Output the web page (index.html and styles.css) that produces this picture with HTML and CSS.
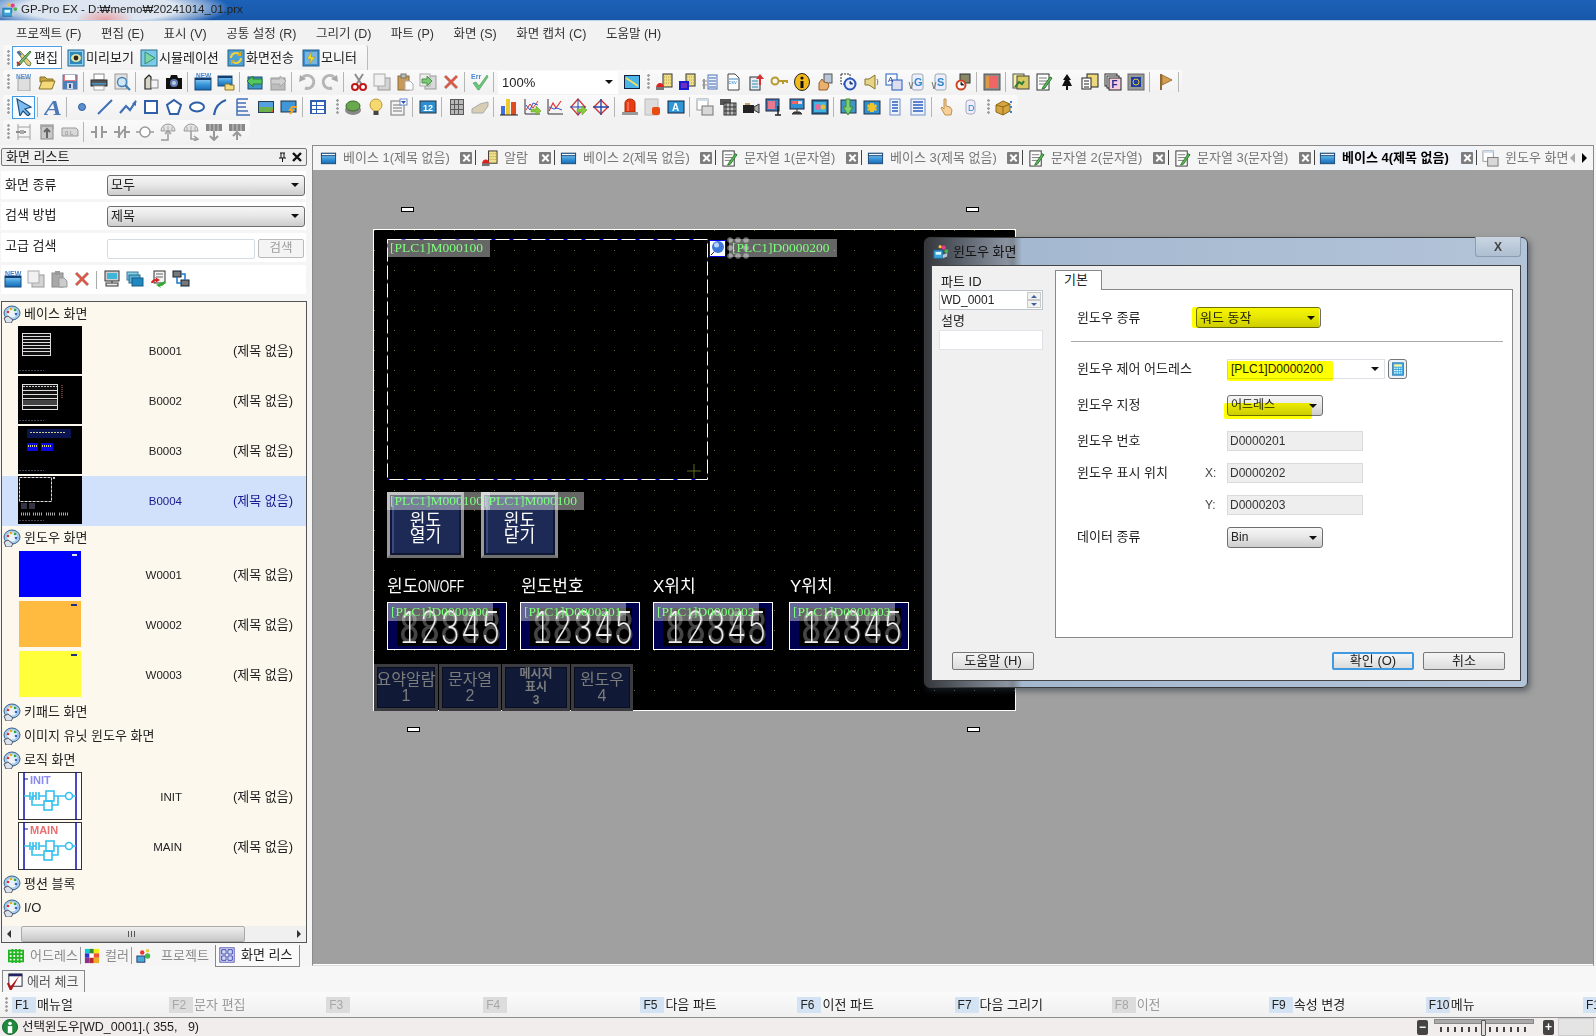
FILE: index.html
```html
<!DOCTYPE html>
<html lang="ko">
<head>
<meta charset="utf-8">
<title>GP-Pro EX</title>
<link rel="stylesheet" href="styles.css">
</head>
<body>
<svg class="defs" xmlns="http://www.w3.org/2000/svg">
<defs>
<linearGradient id="bw" x1="0" y1="0" x2="0" y2="1"><stop offset="0" stop-color="#9fd4f5"/><stop offset=".5" stop-color="#3d9bdc"/><stop offset="1" stop-color="#1669b4"/></linearGradient>
<symbol id="app" viewBox="0 0 18 18"><rect x="1" y="7" width="10" height="9" fill="#3ea3d8" stroke="#1d6fa5"/><rect x="3" y="9" width="6" height="3" fill="#dff"/><circle cx="12" cy="4" r="2.4" fill="#e8398c"/><circle cx="15" cy="8" r="2.2" fill="#49b649"/><circle cx="8" cy="3" r="1.8" fill="#f2c230"/><path d="M11 12l5-2v4l-5 2z" fill="#b5c7d8"/></symbol>
<symbol id="edit" viewBox="0 0 18 18"><path d="M2 3l3-1 11 12-1 3-3-1z" fill="#e3d27c" stroke="#6f7d52"/><path d="M15 2l1 1L5 16l-3 1 1-3z" fill="#7fb96c" stroke="#4a7a47"/><path d="M2 13l3 3" stroke="#b33" stroke-width="2"/><path d="M3 3l3 3" stroke="#46a" stroke-width="2"/></symbol>
<symbol id="prev" viewBox="0 0 18 18"><rect x="1" y="1" width="16" height="16" fill="#8fd0ef" stroke="#24608c"/><rect x="3" y="3" width="12" height="12" fill="#2b88b8"/><ellipse cx="9" cy="9" rx="5" ry="4" fill="#e8e2a8"/><circle cx="9" cy="9" r="2.4" fill="#2a2a18"/></symbol>
<symbol id="sim" viewBox="0 0 18 18"><rect x="1" y="1" width="16" height="16" fill="#7cc9e8" stroke="#24708c"/><path d="M5 3l10 6-10 6z" fill="#7fd4a4" stroke="#2f8f78"/></symbol>
<symbol id="send" viewBox="0 0 18 18"><rect x="1" y="1" width="16" height="16" fill="#4ca0d4" stroke="#24608c"/><path d="M4 9a5 5 0 0 1 9-3M14 9a5 5 0 0 1-9 3" fill="none" stroke="#f0d040" stroke-width="2"/><path d="M14 2v5h-4zM4 16v-5h4z" fill="#d8a820"/></symbol>
<symbol id="moni" viewBox="0 0 18 18"><rect x="1" y="1" width="16" height="16" fill="#3f8fd0" stroke="#24608c"/><rect x="3" y="3" width="12" height="12" fill="#77b5e5"/><path d="M10 2L5 10h4l-2 6 6-8H9z" fill="#f2e030" stroke="#a08a10" stroke-width=".5"/></symbol>
<symbol id="new" viewBox="0 0 18 18"><rect x="3" y="5" width="12" height="13" fill="#dedede" stroke="#a5a5a5"/><text x="1" y="6" font-size="6.5" font-weight="700" font-family="Liberation Sans" fill="#5a8fd0">NEW</text></symbol>
<symbol id="open" viewBox="0 0 18 18"><path d="M2 4h5l2 2h6v3H2z" fill="#c9a540" stroke="#857025"/><path d="M1 16L4 8h13l-3 8z" fill="#f5d877" stroke="#857025"/></symbol>
<symbol id="save" viewBox="0 0 18 18"><rect x="2" y="2" width="14" height="14" fill="#e57a80" stroke="#5c6f9a"/><rect x="4" y="2" width="10" height="5" fill="#fff"/><rect x="2" y="8" width="14" height="8" fill="#4f7fb8"/><rect x="6" y="10" width="6" height="6" fill="#cfd8e8"/><rect x="8" y="11" width="2" height="4" fill="#33527f"/></symbol>
<symbol id="print" viewBox="0 0 18 18"><rect x="4" y="1" width="10" height="6" fill="#fff" stroke="#888"/><rect x="1" y="7" width="16" height="6" fill="#555" stroke="#333"/><rect x="2" y="10" width="14" height="1.5" fill="#49c"/><rect x="4" y="13" width="10" height="4" fill="#fff" stroke="#aaa"/></symbol>
<symbol id="preview" viewBox="0 0 18 18"><rect x="2" y="1" width="12" height="15" fill="#e2e2e2" stroke="#999"/><circle cx="9" cy="9" r="4.5" fill="#cfe7f7" stroke="#3f7fb5" stroke-width="1.3"/><path d="M12 12l5 5" stroke="#3f7fb5" stroke-width="2.2"/></symbol>
<symbol id="clip" viewBox="0 0 18 18"><path d="M3 6l4-4 2 2v12H3z" fill="#d9d6c5" stroke="#222" stroke-width="1.2"/><rect x="9" y="7" width="7" height="8" fill="#f4f4f4" stroke="#888"/></symbol>
<symbol id="cam" viewBox="0 0 18 18"><path d="M1 5h4l1-3h6l1 3h4v11H1z" fill="#111"/><circle cx="9" cy="10" r="4" fill="#5f7fb8"/><circle cx="9" cy="10" r="2" fill="#bcd"/></symbol>
<symbol id="win" viewBox="0 0 18 18"><rect x="1.500" y="3.500" width="15" height="11" fill="url(#bw)" stroke="#1b4a78"/><rect x="1.500" y="3.500" width="15" height="2.500" fill="#eef6fc" stroke="#1b4a78"/></symbol>
<symbol id="newscr" viewBox="0 0 18 18"><rect x="1" y="5" width="16" height="12" fill="url(#bw)" stroke="#1b4a78"/><rect x="1" y="5" width="16" height="2" fill="#123f70"/><text x="2" y="5" font-size="6.500" font-weight="700" font-family="Liberation Sans" fill="#4c88cc">NEW</text></symbol>
<symbol id="scrf" viewBox="0 0 18 18"><rect x="1" y="3" width="14" height="10" fill="url(#bw)" stroke="#24507a"/><rect x="1" y="3" width="14" height="2" fill="#123f70"/><path d="M8 11h4l1 1h4v5H8z" fill="#f3dd80" stroke="#8a7428"/></symbol>
<symbol id="gback" viewBox="0 0 18 18"><rect x="2" y="4" width="14" height="12" fill="#3f97c7" stroke="#1b4a78"/><path d="M1 8l6-5v3h9v5H7v3z" fill="#56c65e" stroke="#2b7d38"/></symbol>
<symbol id="gfwd" viewBox="0 0 18 18"><rect x="2" y="5" width="14" height="12" fill="#bdbdbd" stroke="#999"/><path d="M17 8l-6-5v3H2v5h9v3z" fill="#cfcfcf" stroke="#a8a8a8"/></symbol>
<symbol id="undo" viewBox="0 0 18 18"><path d="M5 4a6.500 6.500 0 1 1 2 11" fill="none" stroke="#b5b5b5" stroke-width="3"/><path d="M1 9l1-7 6 4z" fill="#a8a8a8"/></symbol>
<symbol id="redo" viewBox="0 0 18 18"><path d="M13 4a6.500 6.500 0 1 0-2 11" fill="none" stroke="#b5b5b5" stroke-width="3"/><path d="M17 9l-1-7-6 4z" fill="#a8a8a8"/></symbol>
<symbol id="cut" viewBox="0 0 18 18"><path d="M5 1l7 11M13 1L6 12" stroke="#8d8d8d" stroke-width="2"/><circle cx="5" cy="14" r="3" fill="#fff" stroke="#c01818" stroke-width="2"/><circle cx="13" cy="14" r="3" fill="#fff" stroke="#c01818" stroke-width="2"/></symbol>
<symbol id="copy" viewBox="0 0 18 18"><rect x="5" y="5" width="12" height="12" fill="#d4d4d4" stroke="#999"/><rect x="1" y="1" width="11" height="12" fill="#f1f1f1" stroke="#aaa"/></symbol>
<symbol id="paste" viewBox="0 0 18 18"><rect x="2" y="3" width="11" height="14" fill="#c99a58" stroke="#8a6a3a"/><rect x="5" y="1" width="5" height="4" fill="#bbb" stroke="#777"/><path d="M9 8h5l3 3v6H9z" fill="#fff" stroke="#aaa"/></symbol>
<symbol id="dup" viewBox="0 0 18 18"><rect x="6" y="3" width="11" height="13" fill="#d8d8d8" stroke="#999"/><rect x="1" y="1" width="10" height="12" fill="#eee" stroke="#aaa"/><path d="M3 6h5V3l5 5-5 5v-3H3z" fill="#7cc777" stroke="#4b9448"/></symbol>
<symbol id="del" viewBox="0 0 18 18"><path d="M2 4l2-2 5 5 5-5 2 2-5 5 5 5-2 2-5-5-5 5-2-2 5-5z" fill="#dc5a48" stroke="#b8b8b8" stroke-width=".6"/></symbol>
<symbol id="err" viewBox="0 0 18 18"><text x="0" y="6" font-size="7" font-weight="700" font-family="Liberation Sans" fill="#4c88cc">Err</text><path d="M2 10l3-1 3 4 8-11 1 2-9 13h-1z" fill="#69c77a" stroke="#3c8a4a" stroke-width=".5"/></symbol>
<symbol id="mon" viewBox="0 0 18 18"><rect x="1" y="2" width="16" height="14" fill="#111f40"/><rect x="2" y="3" width="14" height="12" fill="#4cb5e8"/><path d="M3 5l12 8" stroke="#f5e060" stroke-width="1.600"/></symbol>
<symbol id="almb" viewBox="0 0 18 18"><rect x="8" y="1" width="9" height="13" fill="#efe08a" stroke="#333"/><path d="M9 4h7M9 7h7M9 10h7" stroke="#b8a040" stroke-dasharray="1 1"/><path d="M1 15a4 5 0 0 1 8 0z" fill="#d22"/><rect x="1" y="14" width="8" height="3" fill="#777"/></symbol>
<symbol id="almc" viewBox="0 0 18 18"><rect x="8" y="1" width="9" height="12" fill="#efe08a" stroke="#333"/><path d="M9 4h7M9 7h7M9 10h7" stroke="#b8a040" stroke-dasharray="1 1"/><rect x="2" y="9" width="8" height="7" fill="#6a2ec0" stroke="#1a1ad0" stroke-width="2"/></symbol>
<symbol id="vlist" viewBox="0 0 18 18"><rect x="7" y="2" width="9" height="14" fill="#eef2fa" stroke="#4f79b8"/><path d="M8 5h7M8 8h7M8 11h7M8 14h7" stroke="#3f66b0"/><rect x="2" y="6" width="2" height="10" fill="#9a9a9a"/><path d="M1 8h5M1 12h5" stroke="#999"/></symbol>
<symbol id="csv" viewBox="0 0 18 18"><path d="M4 1h7l4 4v12H4z" fill="#fff" stroke="#444"/><path d="M5 6h9" stroke="#38c"/><text x="4.500" y="11" font-size="5.500" font-family="Liberation Sans" fill="#38c">csv</text></symbol>
<symbol id="up" viewBox="0 0 18 18"><rect x="3" y="4" width="10" height="13" fill="#e8edf5" stroke="#233"/><path d="M5 8h6M5 11h6M5 14h6" stroke="#38a"/><path d="M13 1l4 5h-3v6h-2V6H9z" fill="#d43030"/></symbol>
<symbol id="key" viewBox="0 0 18 18"><circle cx="5" cy="8" r="3.500" fill="none" stroke="#b89a30" stroke-width="2"/><path d="M8 8h9v2M13 8v3" fill="none" stroke="#b89a30" stroke-width="2"/></symbol>
<symbol id="info" viewBox="0 0 18 18"><ellipse cx="9" cy="9" rx="7.500" ry="8.500" fill="#f2b91c" stroke="#222"/><circle cx="9" cy="5" r="1.600" fill="#111"/><rect x="7.500" y="8" width="3" height="7" fill="#111"/></symbol>
<symbol id="hand" viewBox="0 0 18 18"><rect x="8" y="1" width="8" height="9" fill="#b8c6d8" stroke="#555"/><path d="M3 17v-7l3-4 2 3 4 1 1 3-2 4z" fill="#eab06e" stroke="#96602a"/></symbol>
<symbol id="clock" viewBox="0 0 18 18"><rect x="2" y="1" width="9" height="10" fill="#fff" stroke="#333" stroke-dasharray="2 1"/><circle cx="11" cy="11" r="5.500" fill="#e8eefa" stroke="#2b57b8" stroke-width="2"/><path d="M11 8v3h3" stroke="#2b57b8"/></symbol>
<symbol id="spk" viewBox="0 0 18 18"><path d="M3 6h4l6-4v14l-6-4H3z" fill="#e6d488" stroke="#8a7428"/><path d="M15 6c1 2 1 4 0 6" stroke="#8a7428" fill="none"/></symbol>
<symbol id="abc" viewBox="0 0 18 18"><rect x="1" y="1" width="11" height="11" fill="#fff" stroke="#1f5dc0"/><rect x="7" y="7" width="10" height="10" fill="#dde" stroke="#1f5dc0"/><text x="3" y="9" font-size="8" font-family="Liberation Sans" fill="#1f3a80">A</text></symbol>
<symbol id="vg" viewBox="0 0 18 18"><rect x="4" y="1" width="11" height="16" rx="2" fill="#eef" stroke="#9aa"/><text x="6" y="13" font-size="11" font-weight="700" font-family="Liberation Sans" fill="#38c">G</text><path d="M1 9l2 7 2-7" fill="none" stroke="#777"/></symbol>
<symbol id="vs" viewBox="0 0 18 18"><rect x="4" y="1" width="11" height="16" rx="2" fill="#eef" stroke="#9aa"/><text x="6" y="13" font-size="11" font-weight="700" font-family="Liberation Sans" fill="#38c">S</text><path d="M1 9l2 7 2-7" fill="none" stroke="#777"/></symbol>
<symbol id="gear" viewBox="0 0 18 18"><rect x="6" y="1" width="10" height="9" fill="#886" stroke="#333"/><circle cx="7" cy="12" r="4.500" fill="#fff" stroke="#c42" stroke-width="2"/><path d="M7 9v3h3" stroke="#333"/></symbol>
<symbol id="sq" viewBox="0 0 18 18"><rect x="1" y="1" width="16" height="16" fill="#8a8a8a" stroke="#555"/><rect x="3" y="3" width="12" height="12" fill="#d94"/><rect x="6" y="3" width="9" height="12" fill="#e66"/></symbol>
<symbol id="trend" viewBox="0 0 18 18"><rect x="1" y="1" width="11" height="14" fill="#f8f0a0" stroke="#555"/><rect x="5" y="3" width="12" height="13" fill="#d8c860" stroke="#444"/><path d="M3 14l4-5 3 2 2-3" stroke="#2a7a38" stroke-width="2" fill="none"/></symbol>
<symbol id="note" viewBox="0 0 18 18"><rect x="2" y="1" width="12" height="16" fill="#fff" stroke="#333"/><path d="M4 5h8M4 8h8M4 11h6" stroke="#777"/><path d="M8 14L15 4l2 1-7 10-3 1z" fill="#5cb85c" stroke="#2c7a2c"/></symbol>
<symbol id="stamp" viewBox="0 0 18 18"><path d="M9 1l4 6h-2l3 6h-4v4H8v-4H4l3-6H5z" fill="#111"/></symbol>
<symbol id="film" viewBox="0 0 18 18"><rect x="6" y="1" width="11" height="13" fill="#ecd97c" stroke="#222"/><rect x="1" y="5" width="9" height="11" fill="#fff" stroke="#222"/><path d="M3 8h5M3 11h5M3 14h5" stroke="#222"/></symbol>
<symbol id="ff" viewBox="0 0 18 18"><rect x="1" y="1" width="12" height="12" fill="#fff" stroke="#222"/><rect x="3" y="3" width="12" height="12" fill="#fff" stroke="#222"/><rect x="5" y="5" width="12" height="12" fill="#f6cfe0" stroke="#222"/><text x="7.500" y="15" font-size="10" font-weight="700" font-family="Liberation Sans" fill="#2a2a8c">F</text></symbol>
<symbol id="gsq" viewBox="0 0 18 18"><rect x="1" y="1" width="16" height="16" fill="#9a9a9a" stroke="#666"/><rect x="4" y="4" width="10" height="10" fill="#1d3fa0"/><circle cx="9" cy="9" r="3" fill="none" stroke="#e8c830"/></symbol>
<symbol id="flag" viewBox="0 0 18 18"><path d="M5 1v16" stroke="#8a6a3a" stroke-width="2"/><path d="M6 2l10 5-10 5z" fill="#d4a050" stroke="#a07030"/></symbol>
<symbol id="sel" viewBox="0 0 18 18"><path d="M2 1l14 8-6 2 5 5-2 2-5-5-3 5z" fill="#7dbcf0" stroke="#20507f" stroke-width="1.200"/></symbol>
<symbol id="atxt" viewBox="0 0 18 18"><text x="0" y="17" font-size="22" font-style="italic" font-weight="700" font-family="Liberation Serif" fill="#4f77b8" textLength="18" lengthAdjust="spacingAndGlyphs">A</text></symbol>
<symbol id="dot" viewBox="0 0 18 18"><circle cx="9" cy="9" r="3.500" fill="#5c8fd0" stroke="#2f5fa0"/></symbol>
<symbol id="line" viewBox="0 0 18 18"><path d="M2 16L16 2" stroke="#3f6fb8" stroke-width="2"/></symbol>
<symbol id="poly" viewBox="0 0 18 18"><path d="M1 15l6-7 4 4 6-9" fill="none" stroke="#3f6fb8" stroke-width="2.200"/><path d="M13 6l4-4v6z" fill="#3f6fb8"/></symbol>
<symbol id="rect" viewBox="0 0 18 18"><rect x="3" y="3" width="12" height="12" fill="#fff" stroke="#2f5fa8" stroke-width="2"/></symbol>
<symbol id="pent" viewBox="0 0 18 18"><path d="M9 2l7 5-3 9H5L2 7z" fill="#fff" stroke="#2f5fa8" stroke-width="2"/></symbol>
<symbol id="ell" viewBox="0 0 18 18"><ellipse cx="9" cy="9" rx="7" ry="4.500" fill="#fff" stroke="#2f5fa8" stroke-width="2"/></symbol>
<symbol id="arc" viewBox="0 0 18 18"><path d="M3 17C4 9 9 4 15 2" fill="none" stroke="#2f5fa8" stroke-width="2.200"/></symbol>
<symbol id="scale" viewBox="0 0 18 18"><path d="M3 1v16h13M3 1h11M3 5h9M3 9h9M3 13h11" fill="none" stroke="#4470b8" stroke-width="1.500"/></symbol>
<symbol id="img" viewBox="0 0 18 18"><rect x="1" y="3" width="16" height="12" fill="#2c3e50"/><rect x="2" y="4" width="14" height="5" fill="#54a0e0"/><rect x="2" y="9" width="14" height="5" fill="#6ab04c"/><path d="M14 14l2-2v2z" fill="#e44"/></symbol>
<symbol id="imga" viewBox="0 0 18 18"><rect x="1" y="3" width="15" height="11" fill="#3f97d7" stroke="#234"/><path d="M17 9l-5 0-2 3 3 0-3 4" fill="none" stroke="#eca42c" stroke-width="2"/></symbol>
<symbol id="tbl" viewBox="0 0 18 18"><rect x="1" y="2" width="16" height="14" fill="#2f5fb0"/><path d="M3 4h4v3H3zM8 4h7v3H8zM3 8h4v3H3zM8 8h7v3H8zM3 12h4v3H3zM8 12h7v3H8z" fill="#fff"/></symbol>
<symbol id="pbtn" viewBox="0 0 18 18"><ellipse cx="9" cy="12" rx="8" ry="5" fill="#888"/><ellipse cx="9" cy="8" rx="7" ry="5" fill="#6aa84f" stroke="#3a6a28"/></symbol>
<symbol id="bulb" viewBox="0 0 18 18"><circle cx="9" cy="7" r="6" fill="#f5d870" stroke="#b89a30"/><rect x="6.500" y="13" width="5" height="4" fill="#444"/></symbol>
<symbol id="ddl" viewBox="0 0 18 18"><rect x="1" y="3" width="13" height="14" fill="#f4f4f4" stroke="#777"/><path d="M3 7h9M3 10h9M3 13h9" stroke="#777"/><rect x="10" y="1" width="7" height="6" fill="#fff" stroke="#6a8ad0"/><path d="M11 3h5l-2.500 3z" fill="#2f4fb0"/></symbol>
<symbol id="n12" viewBox="0 0 18 18"><rect x="1" y="3" width="16" height="12" fill="#2f8fd0" stroke="#234"/><text x="4" y="13" font-size="9" font-weight="700" font-family="Liberation Sans" fill="#fff">12</text></symbol>
<symbol id="grid" viewBox="0 0 18 18"><rect x="2" y="1" width="14" height="16" fill="#5a5a5a"/><path d="M3 2h3v4H3zM7 2h3v4H7zM11 2h4v4h-4zM3 7h3v4H3zM7 7h3v4H7zM11 7h4v4h-4zM3 12h3v4H3zM7 12h3v4H7zM11 12h4v4h-4z" fill="#b8b8b8"/></symbol>
<symbol id="boxg" viewBox="0 0 18 18"><path d="M1 11l8-5 8-2v4l-5 7H1z" fill="#d8ceb4" stroke="#aaa"/></symbol>
<symbol id="bars" viewBox="0 0 18 18"><rect x="1" y="8" width="4" height="9" fill="#3f6fe0"/><rect x="6" y="1" width="4" height="16" fill="#eecb2c"/><rect x="11" y="4" width="5" height="13" fill="#e04c20"/><path d="M0 17h18" stroke="#222"/></symbol>
<symbol id="lng" viewBox="0 0 18 18"><path d="M2 1v15h15" stroke="#333" fill="none"/><path d="M3 12l4-6 3 4 5-7" stroke="#d33" fill="none"/><path d="M3 7l4 5 3-7 5 2" stroke="#35c" fill="none"/><path d="M8 11h5V8l5 5-5 4v-3H8z" fill="#8acb3c" stroke="#5a9020" stroke-width=".5"/></symbol>
<symbol id="lng2" viewBox="0 0 18 18"><path d="M2 1v15h15" stroke="#333" fill="none"/><path d="M3 13l4-8 3 5 5-7" stroke="#d33" stroke-width="1.200" fill="none"/><path d="M3 9l5 2 3-1 5 2" stroke="#35c" fill="none"/></symbol>
<symbol id="dia" viewBox="0 0 18 18"><path d="M9 1l7 8-7 8-7-8z" fill="none" stroke="#c33" stroke-width="1.200"/><path d="M1 9h16M9 1v16" stroke="#24a"/><path d="M8 11h5V8l5 4-5 5v-3H8z" fill="#8acb3c" stroke="#5a9020" stroke-width=".5"/></symbol>
<symbol id="dia2" viewBox="0 0 18 18"><path d="M9 2l7 7-7 7-7-7z" fill="none" stroke="#c33" stroke-width="1.400"/><path d="M1 9h16M9 1v16" stroke="#24a" stroke-width="1.400"/></symbol>
<symbol id="lamp" viewBox="0 0 18 18"><path d="M4 14V5a5 4 0 0 1 10 0v9z" fill="#e83c10" stroke="#a82a08"/><path d="M7 4v9" stroke="#f9a"/><rect x="1" y="14" width="16" height="3" fill="#999"/></symbol>
<symbol id="almp" viewBox="0 0 18 18"><rect x="1" y="1" width="13" height="16" fill="#ddd" stroke="#bbb"/><rect x="8" y="9" width="8" height="8" rx="2" fill="#e84c10"/></symbol>
<symbol id="aw" viewBox="0 0 18 18"><rect x="1" y="3" width="16" height="12" fill="#2f97d8" stroke="#124"/><text x="5" y="13" font-size="10" font-weight="700" font-family="Liberation Sans" fill="#fff">A</text></symbol>
<symbol id="wins" viewBox="0 0 18 18"><rect x="1" y="1" width="11" height="11" fill="#fff" stroke="#999"/><rect x="1" y="1" width="11" height="2" fill="#cde"/><rect x="6" y="8" width="11" height="9" fill="#d8d8d8" stroke="#777"/></symbol>
<symbol id="film2" viewBox="0 0 18 18"><rect x="1" y="1" width="11" height="6" fill="#555"/><rect x="5" y="5" width="12" height="12" fill="#bbb" stroke="#333"/><path d="M7 5v12M11 5v12M15 5v12M5 9h12M5 13h12" stroke="#333"/></symbol>
<symbol id="camr" viewBox="0 0 18 18"><rect x="1" y="7" width="11" height="8" fill="#222"/><path d="M12 9l5-3v9l-5-3z" fill="#aaa" stroke="#333"/><rect x="3" y="5" width="5" height="2" fill="#c8a060"/></symbol>
<symbol id="vid" viewBox="0 0 18 18"><rect x="1" y="1" width="13" height="12" fill="#3c7fc0" stroke="#223"/><rect x="3" y="3" width="7" height="8" fill="#e8788c"/><path d="M13 8v9M10 17h6" stroke="#222" stroke-width="1.500"/></symbol>
<symbol id="pc" viewBox="0 0 18 18"><rect x="2" y="1" width="14" height="10" fill="#2f8fd0" stroke="#223"/><rect x="4" y="3" width="5" height="3" fill="#e66"/><rect x="10" y="3" width="4" height="3" fill="#ecc"/><path d="M9 11v4M4 16h10l-2-2H6z" fill="#444" stroke="#333"/></symbol>
<symbol id="mix" viewBox="0 0 18 18"><rect x="1" y="2" width="16" height="14" fill="#2f6fa0" stroke="#123"/><rect x="3" y="4" width="12" height="10" fill="#3fb5e0"/><circle cx="7" cy="9" r="3" fill="#e66aa0"/><circle cx="12" cy="9" r="2.500" fill="#e0c040"/></symbol>
<symbol id="dl" viewBox="0 0 18 18"><rect x="1" y="2" width="15" height="13" fill="#3f97c7" stroke="#234"/><path d="M6 1h4v8h3l-5 8-5-8h3z" fill="#7fd070" stroke="#3a8a38"/></symbol>
<symbol id="star" viewBox="0 0 18 18"><rect x="1" y="3" width="16" height="13" fill="#2f8fd0" stroke="#234"/><path d="M7 5h4v2l2-1 1 3-2 1 2 1-1 2-2-1v2H7v-2l-2 1-1-2 2-1-2-1 1-3 2 1z" fill="#f0c428"/></symbol>
<symbol id="lst" viewBox="0 0 18 18"><rect x="4" y="1" width="10" height="16" fill="#eef3fb" stroke="#7090c8"/><path d="M6 4h6M6 7h6M6 10h6M6 13h6" stroke="#2f5fc0" stroke-width="1.500"/></symbol>
<symbol id="lst2" viewBox="0 0 18 18"><rect x="2" y="1" width="14" height="16" fill="#eef3fb" stroke="#7090c8"/><path d="M4 4h10M4 7h10M4 10h10M4 13h10" stroke="#2f5fc0" stroke-width="1.500"/></symbol>
<symbol id="touch" viewBox="0 0 18 18"><path d="M6 1h2v7l4 1 2 3-1 5H7L3 10l1-1 2 2z" fill="#f5d098" stroke="#c09050"/></symbol>
<symbol id="cyl" viewBox="0 0 18 18"><rect x="5" y="2" width="9" height="14" rx="3" fill="#eef" stroke="#aab"/><text x="7" y="13" font-size="9" font-family="Liberation Sans" fill="#38c">D</text></symbol>
<symbol id="pkg" viewBox="0 0 18 18"><path d="M1 7l7-4 7 3v7l-7 4-7-3z" fill="#d8a43c" stroke="#8a6820"/><path d="M8 9v8M1 7l7 2 7-3" stroke="#8a6820" fill="none"/><path d="M16 3v2M16 8v2M16 13v2" stroke="#38c" stroke-width="2"/></symbol>
<symbol id="lad1" viewBox="0 0 18 18"><path d="M3 1v16M15 1v16M3 4h12M3 14h12" stroke="#a0a0a0" fill="none"/><path d="M1 9h10" stroke="#8a8a8a" stroke-width="2"/><rect x="5" y="7" width="4" height="4" fill="#aaa"/></symbol>
<symbol id="lad2" viewBox="0 0 18 18"><path d="M2 2h14M2 5h14" stroke="#8a8a8a"/><rect x="3" y="3" width="12" height="13" fill="#c8c8c8" stroke="#8a8a8a"/><path d="M9 15V6M6 9l3-3 3 3" stroke="#666" stroke-width="2" fill="none"/></symbol>
<symbol id="lad3" viewBox="0 0 18 18"><path d="M1 5h14l2 2v6H1z" fill="#d8d8d8" stroke="#999"/><text x="4" y="12" font-size="6" font-family="Liberation Sans" fill="#888">0 L</text></symbol>
<symbol id="nc" viewBox="0 0 18 18"><path d="M1 9h5M12 9h5M6 3v12M12 3v12" stroke="#9a9a9a" stroke-width="2"/></symbol>
<symbol id="no" viewBox="0 0 18 18"><path d="M1 9h5M12 9h5M6 3v12M12 3v12M5 14L13 4" stroke="#9a9a9a" stroke-width="2"/></symbol>
<symbol id="coil" viewBox="0 0 18 18"><circle cx="9" cy="9" r="5" fill="#fff" stroke="#9a9a9a" stroke-width="1.500"/><path d="M0 9h4M14 9h4" stroke="#9a9a9a" stroke-width="1.500"/></symbol>
<symbol id="gaugeu" viewBox="0 0 18 18"><path d="M2 8a7 7 0 0 1 14 0z" fill="#e4e4e4" stroke="#999"/><path d="M5 8V4M9 8V3M13 8V4" stroke="#aaa"/><path d="M2 17h7v-7" fill="none" stroke="#999" stroke-width="1.500"/><path d="M6 11l3-3 3 3" fill="none" stroke="#999" stroke-width="1.500"/></symbol>
<symbol id="gauged" viewBox="0 0 18 18"><path d="M2 8a7 7 0 0 1 14 0z" fill="#e4e4e4" stroke="#999"/><path d="M5 8V4M9 8V3M13 8V4" stroke="#aaa"/><path d="M9 8v8h7" fill="none" stroke="#999" stroke-width="1.500"/><path d="M12 13l4 3-4 2" fill="none" stroke="#999" stroke-width="1.500"/></symbol>
<symbol id="regd" viewBox="0 0 18 18"><rect x="1" y="1" width="16" height="7" fill="#888"/><path d="M5 1v7M9 1v7M13 1v7" stroke="#ccc"/><path d="M9 8v9M5 13l4 4 4-4" stroke="#999" stroke-width="2" fill="none"/></symbol>
<symbol id="regu" viewBox="0 0 18 18"><rect x="1" y="1" width="16" height="7" fill="#888"/><path d="M5 1v7M9 1v7M13 1v7" stroke="#ccc"/><path d="M9 17V9M5 13l4-4 4 4" stroke="#999" stroke-width="2" fill="none"/></symbol>
<symbol id="grp" viewBox="0 0 18 18"><ellipse cx="9" cy="8" rx="8" ry="7" fill="#a8cbe8" stroke="#35658f"/><ellipse cx="9" cy="8" rx="5" ry="4.500" fill="#eaf3fb"/><circle cx="5" cy="7" r="1.300" fill="#d33"/><circle cx="8" cy="4" r="1.300" fill="#e8b020"/><circle cx="12" cy="5" r="1.300" fill="#3a3"/><circle cx="13" cy="9" r="1.300" fill="#36c"/><path d="M1 13l4-2 5 4-2 3H3z" fill="#d8e4ee" stroke="#556"/></symbol>
<symbol id="dnew" viewBox="0 0 18 18"><rect x="1" y="6" width="16" height="11" fill="url(#bw)" stroke="#1b4a78"/><rect x="1" y="6" width="16" height="2" fill="#123f70"/><text x="1" y="6" font-size="7" font-weight="700" font-family="Liberation Sans" fill="#3f7fcc">NEW</text></symbol>
<symbol id="pst" viewBox="0 0 18 18"><rect x="2" y="3" width="11" height="14" fill="#a8a8a8" stroke="#888"/><rect x="5" y="1" width="5" height="4" fill="#999"/><path d="M9 8h5l3 3v6H9z" fill="#ccc" stroke="#999"/></symbol>
<symbol id="pcm" viewBox="0 0 18 18"><rect x="2" y="1" width="14" height="10" fill="#d0d0d0" stroke="#333"/><rect x="4" y="3" width="10" height="6" fill="#3fb5d8"/><rect x="3" y="13" width="12" height="3" fill="#e8e8e8" stroke="#333"/><path d="M9 11v2" stroke="#333"/></symbol>
<symbol id="wins2" viewBox="0 0 18 18"><rect x="1" y="2" width="11" height="8" fill="#8ad0e8" stroke="#3a7a98"/><rect x="3" y="5" width="11" height="8" fill="#5ab0d8" stroke="#2a6a88"/><rect x="6" y="8" width="11" height="8" fill="#1f88c0" stroke="#1a5a80"/></symbol>
<symbol id="chg" viewBox="0 0 18 18"><rect x="5" y="1" width="11" height="12" fill="#f3f3f3" stroke="#333"/><path d="M7 4h7M7 7h7" stroke="#666"/><path d="M2 13a5 4 0 0 1 5-4l-1-2 5 3-5 3 1-2a3 3 0 0 0-3 2z" fill="#d22"/><path d="M16 11a5 4 0 0 1-5 5l1 2-5-3" fill="#3a3"/></symbol>
<symbol id="net" viewBox="0 0 18 18"><rect x="1" y="1" width="8" height="6" fill="#777" stroke="#123"/><rect x="9" y="10" width="8" height="6" fill="#777" stroke="#123"/><path d="M5 7v6h4M13 10V4H9" stroke="#1a78d0" stroke-width="1.500" fill="none"/></symbol>
<symbol id="addr" viewBox="0 0 18 18"><path d="M1 3h16v12H1zM1 7h16M1 11h16M5 1v16M9 1v16M13 1v16" fill="none" stroke="#1fb51f" stroke-width="2"/></symbol>
<symbol id="color" viewBox="0 0 18 18"><rect x="1" y="1" width="16" height="16" fill="#fff"/><rect x="1" y="1" width="5" height="5" fill="#1cc"/><rect x="6" y="1" width="5" height="5" fill="#383"/><rect x="11" y="1" width="6" height="5" fill="#ee1"/><rect x="1" y="6" width="5" height="5" fill="#33c"/><rect x="11" y="6" width="6" height="5" fill="#e53"/><rect x="1" y="11" width="5" height="6" fill="#838"/><rect x="6" y="11" width="5" height="6" fill="#b23"/><rect x="11" y="11" width="6" height="6" fill="#ea2"/></symbol>
<symbol id="proj" viewBox="0 0 18 18"><rect x="1" y="9" width="9" height="7" fill="#4aa8d8" stroke="#236"/><circle cx="7" cy="5" r="2.500" fill="#e33"/><circle cx="13" cy="9" r="3" fill="#4b4"/><circle cx="13" cy="3" r="2" fill="#ec3"/></symbol>
<symbol id="scrl" viewBox="0 0 18 18"><rect x="1" y="1" width="16" height="16" fill="#fff" stroke="#33a"/><path d="M3 3h5v5H3zM10 3h5v5h-5zM3 10h5v5H3zM10 10h5v5h-5z" fill="#cde" stroke="#33a"/></symbol>
<symbol id="echk" viewBox="0 0 18 18"><rect x="3" y="1" width="14" height="13" fill="#fff" stroke="#223"/><rect x="3" y="1" width="14" height="2.500" fill="#226"/><path d="M1 11l2-1 2 4 9-11-8 15H4z" fill="#b01818"/></symbol>
<symbol id="inf" viewBox="0 0 18 18"><circle cx="9" cy="9" r="8.500" fill="#1f8a3c" stroke="#0c5a20"/><circle cx="9" cy="5" r="2" fill="#fff"/><rect x="6.500" y="8" width="5" height="8" fill="#fff"/></symbol>
<symbol id="calc" viewBox="0 0 18 18"><rect x="2" y="1" width="14" height="16" fill="#3fa8e0" stroke="#2b78a8"/><rect x="4" y="3" width="10" height="3" fill="#fff2a0"/><path d="M4 8h10M4 11h10M4 14h10" stroke="#fff" stroke-width="1.500" stroke-dasharray="2 1"/></symbol>
<symbol id="ladder" viewBox="0 0 64 30"><g fill="none" stroke="#35c0ee" stroke-width="1.600"><path d="M6 10h6M12 6v8M15 6v8M15 10h3M18 6v8M21 6v8M21 10h7M36 10h12"/><rect x="28" y="5" width="8" height="10"/><circle cx="51" cy="10" r="3.500"/><path d="M54 10h4M14 10v9h12M40 10v9h-6"/><rect x="26" y="15" width="8" height="9"/></g></symbol>
</defs>
</svg>
<div class="app">
  <header class="titlebar"><svg class="title-ic"><use href="#app"/></svg><span>GP-Pro EX&nbsp;-&nbsp;D:₩memo₩20241014_01.prx</span></header>
  <nav class="menubar"><span>프로젝트 (F)</span><span>편집 (E)</span><span>표시 (V)</span><span>공통 설정 (R)</span><span>그리기 (D)</span><span>파트 (P)</span><span>화면 (S)</span><span>화면 캡처 (C)</span><span>도움말 (H)</span></nav>
  <div class="row">
    <div class="bar modebar"><i class="grip"></i>
      <span class="mode on"><svg><use href="#edit"/></svg>편집</span>
      <span class="mode m2"><svg><use href="#prev"/></svg>미리보기</span>
      <span class="mode m3"><svg><use href="#sim"/></svg>시뮬레이션</span>
      <span class="mode m4"><svg><use href="#send"/></svg>화면전송</span>
      <span class="mode m5"><svg><use href="#moni"/></svg>모니터</span>
    </div>
  </div>
  <div class="row">
    <div class="bar"><i class="grip"></i>
      <b class="tb"><svg><use href="#new"/></svg></b><b class="tb"><svg><use href="#open"/></svg></b><b class="tb"><svg><use href="#save"/></svg></b><i class="sep"></i>
      <b class="tb"><svg><use href="#print"/></svg></b><b class="tb"><svg><use href="#preview"/></svg></b><i class="sep"></i>
      <b class="tb"><svg><use href="#clip"/></svg></b><b class="tb"><svg><use href="#cam"/></svg></b><i class="sep"></i>
      <b class="tb"><svg><use href="#newscr"/></svg></b><b class="tb"><svg><use href="#scrf"/></svg></b><i class="sep"></i>
      <b class="tb"><svg><use href="#gback"/></svg></b><b class="tb"><svg><use href="#gfwd"/></svg></b><i class="sep"></i>
      <b class="tb"><svg><use href="#undo"/></svg></b><b class="tb"><svg><use href="#redo"/></svg></b><i class="sep"></i>
      <b class="tb"><svg><use href="#cut"/></svg></b><b class="tb"><svg><use href="#copy"/></svg></b><b class="tb"><svg><use href="#paste"/></svg></b><b class="tb"><svg><use href="#dup"/></svg></b><b class="tb"><svg><use href="#del"/></svg></b><i class="sep"></i>
      <b class="tb"><svg><use href="#err"/></svg></b><i class="sep"></i>
      <span class="zoombox">100%<i class="tri"></i></span>
      <b class="tb tb-m"><svg><use href="#mon"/></svg></b>
    </div>
    <div class="bar end"><i class="grip"></i>
      <b class="tb"><svg><use href="#almb"/></svg></b><b class="tb"><svg><use href="#almc"/></svg></b><b class="tb"><svg><use href="#vlist"/></svg></b><b class="tb"><svg><use href="#csv"/></svg></b><b class="tb"><svg><use href="#up"/></svg></b><b class="tb"><svg><use href="#key"/></svg></b><b class="tb"><svg><use href="#info"/></svg></b><b class="tb"><svg><use href="#hand"/></svg></b><b class="tb"><svg><use href="#clock"/></svg></b><b class="tb"><svg><use href="#spk"/></svg></b><b class="tb"><svg><use href="#abc"/></svg></b><b class="tb"><svg><use href="#vg"/></svg></b><b class="tb"><svg><use href="#vs"/></svg></b><b class="tb"><svg><use href="#gear"/></svg></b><i class="sep"></i>
      <b class="tb"><svg><use href="#sq"/></svg></b><i class="sep"></i>
      <b class="tb"><svg><use href="#trend"/></svg></b><b class="tb"><svg><use href="#note"/></svg></b><b class="tb"><svg><use href="#stamp"/></svg></b><b class="tb"><svg><use href="#film"/></svg></b><b class="tb"><svg><use href="#ff"/></svg></b><b class="tb"><svg><use href="#gsq"/></svg></b><i class="sep"></i>
      <b class="tb"><svg><use href="#flag"/></svg></b><i class="sep"></i>
    </div>
  </div>
  <div class="row">
    <div class="bar"><i class="grip"></i>
      <b class="tb on"><svg><use href="#sel"/></svg></b><i class="sep"></i>
      <b class="tb"><svg><use href="#atxt"/></svg></b><i class="sep"></i>
      <b class="tb"><svg><use href="#dot"/></svg></b><b class="tb"><svg><use href="#line"/></svg></b><b class="tb"><svg><use href="#poly"/></svg></b><b class="tb"><svg><use href="#rect"/></svg></b><b class="tb"><svg><use href="#pent"/></svg></b><b class="tb"><svg><use href="#ell"/></svg></b><b class="tb"><svg><use href="#arc"/></svg></b><b class="tb"><svg><use href="#scale"/></svg></b><b class="tb"><svg><use href="#img"/></svg></b><b class="tb"><svg><use href="#imga"/></svg></b><i class="sep"></i>
      <b class="tb"><svg><use href="#tbl"/></svg></b><span class="pad3"></span>
    </div>
    <div class="bar"><i class="grip"></i>
      <b class="tb"><svg><use href="#pbtn"/></svg></b><b class="tb"><svg><use href="#bulb"/></svg></b><b class="tb"><svg><use href="#ddl"/></svg></b><i class="sep"></i>
      <b class="tb"><svg><use href="#n12"/></svg></b><i class="sep"></i>
      <b class="tb"><svg><use href="#grid"/></svg></b><b class="tb"><svg><use href="#boxg"/></svg></b><i class="sep"></i>
      <b class="tb"><svg><use href="#bars"/></svg></b><b class="tb"><svg><use href="#lng"/></svg></b><b class="tb"><svg><use href="#lng2"/></svg></b><b class="tb"><svg><use href="#dia"/></svg></b><b class="tb"><svg><use href="#dia2"/></svg></b><i class="sep"></i>
      <b class="tb"><svg><use href="#lamp"/></svg></b><b class="tb"><svg><use href="#almp"/></svg></b><b class="tb"><svg><use href="#aw"/></svg></b><i class="sep"></i>
      <b class="tb"><svg><use href="#wins"/></svg></b><b class="tb"><svg><use href="#film2"/></svg></b><b class="tb"><svg><use href="#camr"/></svg></b><b class="tb"><svg><use href="#vid"/></svg></b><b class="tb"><svg><use href="#pc"/></svg></b><b class="tb"><svg><use href="#mix"/></svg></b><i class="sep"></i>
      <b class="tb"><svg><use href="#dl"/></svg></b><b class="tb"><svg><use href="#star"/></svg></b><b class="tb"><svg><use href="#lst"/></svg></b><b class="tb"><svg><use href="#lst2"/></svg></b><i class="sep"></i>
      <b class="tb"><svg><use href="#touch"/></svg></b><b class="tb"><svg><use href="#cyl"/></svg></b><span class="pad2"></span>
    </div>
    <div class="bar end"><i class="grip"></i><b class="tb"><svg><use href="#pkg"/></svg></b><span class="pad3"></span></div>
  </div>
  <div class="row">
    <div class="bar end"><i class="grip"></i>
      <b class="tb"><svg><use href="#lad1"/></svg></b><b class="tb"><svg><use href="#lad2"/></svg></b><b class="tb"><svg><use href="#lad3"/></svg></b><i class="sep"></i>
      <b class="tb"><svg><use href="#nc"/></svg></b><b class="tb"><svg><use href="#no"/></svg></b><b class="tb"><svg><use href="#coil"/></svg></b><b class="tb"><svg><use href="#gaugeu"/></svg></b><b class="tb"><svg><use href="#gauged"/></svg></b><b class="tb"><svg><use href="#regd"/></svg></b><b class="tb"><svg><use href="#regu"/></svg></b><span class="pad2"></span>
    </div>
  </div>

  <main class="work">
    <aside class="panel">
      <div class="panel-head"><span>화면 리스트</span><span class="head-ic"><svg viewBox="0 0 10 10"><path d="M3 1h5M4 1v5M7 1v5M2 6h7M5.500 6v4" stroke="#111" fill="none"/></svg><svg viewBox="0 0 10 10"><path d="M1 1l8 8M9 1L1 9" stroke="#111" stroke-width="2.400"/></svg></span></div>
      <div class="band b1r"><label>화면 종류</label><div class="sel sel-wide">모두<i class="tri"></i></div></div>
      <div class="band b2r"><label>검색 방법</label><div class="sel sel-wide">제목<i class="tri"></i></div></div>
      <div class="band b3"><label>고급 검색</label><span class="inp"></span><span class="srch">검색</span></div>
      <div class="band b4">
        <b class="pi"><svg><use href="#dnew"/></svg></b><b class="pi"><svg><use href="#copy"/></svg></b><b class="pi"><svg><use href="#pst"/></svg></b><b class="pi"><svg><use href="#del"/></svg></b><i class="psep"></i>
        <b class="pi"><svg><use href="#pcm"/></svg></b><b class="pi"><svg><use href="#wins2"/></svg></b><b class="pi"><svg><use href="#chg"/></svg></b><b class="pi"><svg><use href="#net"/></svg></b>
      </div>
      <div class="listbox">
        <div class="list">
          <div class="grp"><svg><use href="#grp"/></svg>베이스 화면</div>
          <div class="item"><svg class="thumb" viewBox="0 0 64 48"><rect width="64" height="48"/><rect x="4.500" y="7.500" width="28" height="22" fill="#111" stroke="#ddd"/><path d="M5 10.500h27M5 13.500h27M5 16.500h27M5 19.500h27M5 22.500h27M5 25.500h27" stroke="#ddd"/><path d="M1 44.500h25" stroke="#445" stroke-dasharray="2 1"/></svg><span class="code">B0001</span><span class="ttl">(제목 없음)</span></div>
          <div class="item"><svg class="thumb" viewBox="0 0 64 48"><rect width="64" height="48"/><rect x="4.500" y="8.500" width="35" height="25" fill="#111" stroke="#ddd"/><path d="M5 14.500h34M5 18.500h34M5 22.500h34M5 29.500h34" stroke="#ddd"/><rect x="5" y="24" width="34" height="5" fill="#444"/><path d="M5 10.500h34" stroke="#ccc" stroke-dasharray="2 1"/><path d="M44 9v14" stroke="#633" stroke-dasharray="1 1" stroke-width="2"/><path d="M1 44.500h25" stroke="#445" stroke-dasharray="2 1"/></svg><span class="code">B0002</span><span class="ttl">(제목 없음)</span></div>
          <div class="item"><svg class="thumb" viewBox="0 0 64 48"><rect width="64" height="48"/><rect x="9" y="3" width="44" height="9" fill="#0a1450"/><path d="M12 6.500h36" stroke="#cc8" stroke-dasharray="2 1"/><rect x="9" y="17" width="11" height="8" fill="#0a0ae0"/><rect x="23" y="17" width="12" height="8" fill="#0a0ae0"/><path d="M10 20h9M24 20h10" stroke="#cc8" stroke-dasharray="1 1" stroke-width="2"/><path d="M1 44.500h25" stroke="#445" stroke-dasharray="2 1"/></svg><span class="code">B0003</span><span class="ttl">(제목 없음)</span></div>
          <div class="item cur"><svg class="thumb" viewBox="0 0 64 48"><rect width="64" height="48"/><rect x="1.500" y="1.500" width="32" height="24" stroke="#ddd" stroke-dasharray="3 1"/><rect x="3" y="27" width="6" height="6" fill="#334"/><rect x="11" y="27" width="6" height="6" fill="#334"/><path d="M3 38h10M15 38h10M28 38h10M41 38h10" stroke="#aaa" stroke-dasharray="1 1" stroke-width="3"/><path d="M1 44.500h25" stroke="#445" stroke-dasharray="2 1"/><rect x="35" y="1" width="2" height="2" fill="#ccc"/></svg><span class="code">B0004</span><span class="ttl">(제목 없음)</span></div>
          <div class="grp"><svg><use href="#grp"/></svg>윈도우 화면</div>
          <div class="item"><svg class="thumb" viewBox="0 0 64 48"><rect x="1" y="1" width="62" height="46" fill="#0000ff"/><path d="M54 4h5v2h-5z" fill="#dde"/></svg><span class="code">W0001</span><span class="ttl">(제목 없음)</span></div>
          <div class="item"><svg class="thumb" viewBox="0 0 64 48"><rect x="1" y="1" width="62" height="46" fill="#ffbb40"/><path d="M53 4h6v2h-6z" fill="#237"/></svg><span class="code">W0002</span><span class="ttl">(제목 없음)</span></div>
          <div class="item"><svg class="thumb" viewBox="0 0 64 48"><rect x="1" y="1" width="62" height="46" fill="#ffff3a"/><path d="M53 4h6v2h-6z" fill="#237"/></svg><span class="code">W0003</span><span class="ttl">(제목 없음)</span></div>
          <div class="grp"><svg><use href="#grp"/></svg>키패드 화면</div>
          <div class="grp"><svg><use href="#grp"/></svg>이미지 유닛 윈도우 화면</div>
          <div class="grp"><svg><use href="#grp"/></svg>로직 화면</div>
          <div class="item"><svg class="thumb" viewBox="0 0 64 48"><rect x=".5" y=".5" width="63" height="47" fill="#fff" stroke="#333"/><path d="M6 0v48M58 0v48" stroke="#11a" stroke-width="1.500"/><path d="M6 7h4" stroke="#11a"/><text x="12" y="12" font-size="11" font-weight="700" font-family="Liberation Sans" fill="#8a8af0">INIT</text><use href="#ladder" x="0" y="14" width="64" height="30"/></svg><span class="code">INIT</span><span class="ttl">(제목 없음)</span></div>
          <div class="item"><svg class="thumb" viewBox="0 0 64 48"><rect x=".5" y=".5" width="63" height="47" fill="#fff" stroke="#333"/><path d="M6 0v48M58 0v48" stroke="#11a" stroke-width="1.500"/><path d="M6 7h4" stroke="#11a"/><text x="12" y="12" font-size="11" font-weight="700" font-family="Liberation Sans" fill="#e87070">MAIN</text><use href="#ladder" x="0" y="14" width="64" height="30"/></svg><span class="code">MAIN</span><span class="ttl">(제목 없음)</span></div>
          <div class="grp"><svg><use href="#grp"/></svg>평션 블록</div>
          <div class="grp"><svg><use href="#grp"/></svg>I/O</div>
        </div>
        <div class="hscroll"><i class="arl"></i><span class="hthumb"><i></i></span><i class="arr"></i></div>
      </div>
      <div class="ptabs">
        <span class="pt t1"><svg><use href="#addr"/></svg>어드레스</span>
        <span class="pt t2"><svg><use href="#color"/></svg>컬러</span>
        <span class="pt t3"><svg><use href="#proj"/></svg>프로젝트</span>
        <span class="pt act"><svg><use href="#scrl"/></svg>화면 리스</span>
      </div>
    </aside>
    <section class="doc">
      <div class="tabs">
        <span class="tab"><svg><use href="#win"/></svg><em>베이스 1(제목 없음)</em><i class="x"></i></span>
        <span class="tab"><svg><use href="#almb"/></svg><em class="w-a">알람</em><i class="x"></i></span>
        <span class="tab"><svg><use href="#win"/></svg><em>베이스 2(제목 없음)</em><i class="x"></i></span>
        <span class="tab"><svg><use href="#note"/></svg><em class="w-s">문자열 1(문자열)</em><i class="x"></i></span>
        <span class="tab"><svg><use href="#win"/></svg><em>베이스 3(제목 없음)</em><i class="x"></i></span>
        <span class="tab"><svg><use href="#note"/></svg><em class="w-s">문자열 2(문자열)</em><i class="x"></i></span>
        <span class="tab"><svg><use href="#note"/></svg><em class="w-s">문자열 3(문자열)</em><i class="x"></i></span>
        <span class="tab act"><svg><use href="#win"/></svg><em>베이스 4(제목 없음)</em><i class="x"></i></span>
        <span class="tab last"><svg><use href="#wins"/></svg><em>윈도우 화면</em></span>
        <span class="tabnav"><i class="nl"></i><i class="nr"></i></span>
      </div>
      <div class="canvas">
        <i class="hnd h1"></i><i class="hnd h2"></i><i class="hnd h3"></i><i class="hnd h4"></i>
        <div class="screen">
          <svg class="winrect" viewBox="0 0 321 241"><rect x=".5" y=".5" width="320" height="240" fill="none" stroke="#0000c8"/><rect x=".5" y=".5" width="320" height="240" fill="none" stroke="#fff" stroke-dasharray="14 4"/><path d="M300 232h14M307 225v14" stroke="#5a6a20"/></svg>
          <span class="tag tg1">[PLC1]M000100</span>
          <svg class="orb" viewBox="0 0 17 17"><rect x=".5" y=".5" width="16" height="16" fill="#fff" stroke="#0000e0"/><circle cx="9" cy="7" r="6" fill="#3f78d8"/><circle cx="7.500" cy="5" r="2.500" fill="#b8d4ff"/><path d="M2 15l3-3" stroke="#222"/></svg>
          <svg class="dots" viewBox="0 0 22 22"><g fill="#6a6a6a"><circle cx="3" cy="3" r="2.800"/><circle cx="11" cy="3" r="2.800"/><circle cx="19" cy="3" r="2.800"/><circle cx="3" cy="11" r="2.800"/><circle cx="19" cy="11" r="2.800"/><circle cx="3" cy="19" r="2.800"/><circle cx="11" cy="19" r="2.800"/><circle cx="19" cy="19" r="2.800"/></g></svg>
          <span class="tag tg2">[PLC1]D0000200</span>
          <div class="hw b1">윈도<br>열기</div>
          <div class="hw b2">윈도<br>닫기</div>
          <span class="tag tg3">[PLC1]M000100</span>
          <span class="tag tg4">[PLC1]M000100</span>
          <span class="cap c1">윈도<s>ON/OFF</s></span><span class="cap c2">윈도번호</span><span class="cap c3">X위치</span><span class="cap c4">Y위치</span>
          <div class="disp d1"><span class="seg"><u>88888</u><b>12345</b></span><span class="dtag">[PLC1]D0000200</span></div>
          <div class="disp d2"><span class="seg"><u>88888</u><b>12345</b></span><span class="dtag">[PLC1]D0000201</span></div>
          <div class="disp d3"><span class="seg"><u>88888</u><b>12345</b></span><span class="dtag">[PLC1]D0000202</span></div>
          <div class="disp d4"><span class="seg"><u>88888</u><b>12345</b></span><span class="dtag">[PLC1]D0000203</span></div>
          <div class="hw dim e1">요약알람<br>1</div>
          <div class="hw dim e2">문자열<br>2</div>
          <div class="hw dim e3 tight">메시지<br>표시<br>3</div>
          <div class="hw dim e4">윈도우<br>4</div>
        </div>
        <div class="dialog">
          <div class="dlg-title"><svg><use href="#app"/></svg><span>윈도우 화면</span><i class="dlg-x">X</i></div>
          <div class="dlg-body">
            <div class="dlg-main">
              <div class="dlg-left">
                <label>파트 ID</label>
                <div class="field idf">WD_0001<span class="spin"><i></i><i></i></span></div>
                <label class="l2">설명</label>
                <div class="field descf"></div>
              </div>
              <div class="dlg-tabs">
                <span class="dtab">기본</span>
                <div class="dpanel">
                  <div class="r-top"><label>윈도우 종류</label><div class="sel s-word">워드 동작<i class="tri"></i><i class="hl hl1"></i></div></div>
                  <hr class="dv">
                  <div class="fgrid">
                    <label>윈도우 제어 어드레스</label><span></span>
                    <div class="ctl-row"><div class="combo">[PLC1]D0000200<i class="tri"></i><i class="hl hl2"></i></div><span class="calc"><svg><use href="#calc"/></svg></span></div>
                    <label>윈도우 지정</label><span></span><div class="sel s-mid">어드레스<i class="tri"></i><i class="hl hl3"></i></div>
                    <label>윈도우 번호</label><span></span><div class="ro">D0000201</div>
                    <label>윈도우 표시 위치</label><span class="xy">X:</span><div class="ro">D0000202</div>
                    <span></span><span class="xy">Y:</span><div class="ro">D0000203</div>
                    <label>데이터 종류</label><span></span><div class="sel s-mid">Bin<i class="tri"></i></div>
                  </div>
                </div>
              </div>
            </div>
            <div class="dlg-foot"><span class="btn">도움말 (H)</span><span class="foot-r"><span class="btn def">확인 (O)</span><span class="btn">취소</span></span></div>
          </div>
        </div>
      </div>
    </section>
  </main>
  <div class="errbar"><span class="errtab"><svg><use href="#echk"/></svg>에러 체크</span></div>
  <div class="fkeys"><i class="grip"></i>
    <span class="fk"><kbd>F1</kbd>매뉴얼</span>
    <span class="fk off"><kbd>F2</kbd>문자 편집</span>
    <span class="fk off"><kbd>F3</kbd></span>
    <span class="fk off"><kbd>F4</kbd></span>
    <span class="fk"><kbd>F5</kbd>다음 파트</span>
    <span class="fk"><kbd>F6</kbd>이전 파트</span>
    <span class="fk"><kbd>F7</kbd>다음 그리기</span>
    <span class="fk off"><kbd>F8</kbd>이전</span>
    <span class="fk"><kbd>F9</kbd>속성 변경</span>
    <span class="fk"><kbd>F10</kbd>메뉴</span>
    <span class="fk"><kbd>F11</kbd></span>
  </div>
  <footer class="status">
    <svg class="st-ic"><use href="#inf"/></svg><span class="st-txt">선택윈도우[WD_0001].( 355,   9)</span>
    <span class="zoomctl"><i class="zb">−</i><span class="slider"><i class="rail"></i><i class="ticks"></i><i class="knob"></i></span><i class="zb">+</i><i class="zv"></i></span>
  </footer>
</div>
</body>
</html>
```

FILE: styles.css
```css
* { box-sizing: border-box; }
html, body { margin: 0; padding: 0; background: #f5f5f5; }
body { font: 13px/1.2 "Liberation Sans", "Noto Sans CJK KR", sans-serif; color: #222; overflow: hidden; }
i, em, b, u, s { font-style: normal; font-weight: normal; text-decoration: none; }
.defs { position: absolute; width: 0; height: 0; }
.app { width: 1596px; height: 1036px; display: flex; flex-direction: column; overflow: hidden; }

/* title + menu */
.titlebar { height: 21px; flex: none; display: flex; align-items: center; gap: 3px; padding: 0 0 1px 2px; font-size: 11.500px; color: #222; border-bottom: 1px solid #bcd3ea;
  background: radial-gradient(ellipse 30px 12px at 105px 20px, rgba(240,120,120,.65), transparent), radial-gradient(ellipse 130px 22px at 100px 8px, rgba(225,233,242,.98) 60%, rgba(200,215,235,.5) 85%, transparent 100%), linear-gradient(#1c62b8, #1857a8); }
.title-ic { width: 16px; height: 16px; }
.menubar { height: 24px; flex: none; display: flex; align-items: center; gap: 19.500px; padding: 3px 0 0 16px; color: #333; background: #f2f2f2; font-size: 12.500px; }

/* toolbars */
.row { height: 25px; flex: none; display: flex; align-items: flex-start; padding-left: 3px; background: #f2f2f2; }
.bar { height: 24px; display: flex; align-items: center; padding-left: 4px; background: linear-gradient(#fafafa, #f1f1f1); border-radius: 3px 3px 0 0; }
.bar.end { padding-right: 0; }
.grip { width: 3px; height: 16px; margin-right: 2px; flex: none; background: radial-gradient(circle at 1.500px 1.500px, #a0a0a0 1.200px, transparent 1.500px) 0 0 / 3px 4px; }
.tb { width: 23px; height: 23px; flex: none; display: flex; align-items: center; justify-content: center; }
.tb svg { width: 18px; height: 18px; }
.tb.on { background: #f6fbff; border: 1px solid #3f9ae8; }
.sep { width: 6px; height: 20px; flex: none; position: relative; }
.sep::after { content: ""; position: absolute; left: 2px; top: 0; bottom: 0; width: 1px; background: #b5b5b5; }
.pad3 { width: 3px; }
.pad2 { width: 2px; }
.zoombox { width: 120px; height: 23px; margin-left: 1px; flex: none; background: #fff; display: flex; align-items: center; padding-left: 4px; position: relative; font: 13px "Liberation Sans", sans-serif; }
.tri { position: absolute; right: 5px; top: 50%; margin-top: -2px; width: 0; height: 0; border: 4px solid transparent; border-top: 4px solid #111; border-bottom: 0; }
.tb-m { margin-left: 2px; }
.modebar { padding-right: 10px; height: 25px; border-right: 1px solid #bbb; }
.mode { display: flex; align-items: center; gap: 1px; height: 23px; font-size: 13px; color: #222; white-space: nowrap; }
.mode svg { width: 18px; height: 18px; flex: none; }
.mode.on { width: 50px; padding-left: 2px; background: #fbfdff; border: 1px solid #4a9fe6; margin-right: 5px; gap: 1px; }
.m2 { width: 73px; }
.m3 { width: 87px; }
.m4 { width: 75px; }

/* main area */
.work { height: 821px; flex: none; display: flex; background: #f5f5f5; padding-left: 1px; }
.panel { width: 306px; flex: none; display: flex; flex-direction: column; padding-top: 3px; }
.panel-head { height: 18px; flex: none; margin-right: 0; border: 1px solid #777; border-radius: 2px; background: #efefef; display: flex; align-items: center; justify-content: space-between; padding: 0 4px; font-size: 13px; }
.head-ic { display: flex; gap: 5px; }
.head-ic svg { width: 10px; height: 10px; }
.band { height: 28px; flex: none; margin-top: 5px; margin-right: 1px; background: #fff; display: flex; align-items: center; padding-left: 4px; }
.band + .band { margin-top: 3px; }
.band label { width: 102px; flex: none; color: #222; }
.b2r label { padding-bottom: 2px; }
.b3 { height: 29px; }
.b3 label { padding-bottom: 4px; }
.b3 .inp, .b3 .srch { margin-top: 2px; }
.b4 { height: 29px; padding-left: 0; }
.b4 svg { margin-top: -2px; }
.sel { height: 21px; border: 1px solid #6f6f6f; border-radius: 3px; background: linear-gradient(#f6f6f6 0, #e8e8e8 45%, #cdcdcd 100%); display: flex; align-items: center; padding-left: 3px; position: relative; }
.sel-wide { width: 198px; }
.inp { width: 148px; height: 20px; border: 1px solid #d4dbe3; border-radius: 2px; background: #fff; }
.srch { width: 46px; height: 19px; margin-left: 3px; border: 1px solid #bbb; border-radius: 2px; background: #f4f4f4; color: #9a9a9a; display: flex; align-items: center; justify-content: center; font-size: 12.500px; }
.pi { width: 23px; display: flex; justify-content: center; flex: none; }
.pi svg { width: 18px; height: 18px; }
.psep { width: 1px; height: 18px; background: #aaa; margin: 0 3px 0 3px; flex: none; }
.listbox { height: 642px; flex: none; margin-top: 7px; border: 1px solid #555; background: #fdf8ee; display: flex; flex-direction: column; overflow: hidden; }
.list { height: 624px; flex: none; padding-top: 0; }
.grp { height: 24px; display: flex; align-items: center; gap: 3px; padding-left: 1px; color: #222; }
.grp svg { width: 18px; height: 18px; }
.item { height: 50px; display: grid; grid-template-columns: 64px 100px 1fr; align-items: center; padding-left: 16px; }
.thumb { width: 64px; height: 48px; align-self: start; }
.code { text-align: right; font-size: 11.500px; color: #222; padding-top: 2px; }
.ttl { padding-left: 51px; color: #222; }
.cur { background: #d1e0fb; }
.cur .code, .cur .ttl { color: #1a1a90; }
.hscroll { height: 16px; flex: none; background: #f0f0f0; position: relative; }
.arl, .arr { position: absolute; top: 4px; width: 0; height: 0; border: 4px solid transparent; }
.arl { left: 5px; border-right-color: #333; border-left: 0; }
.arr { right: 5px; border-left-color: #333; border-right: 0; }
.hthumb { position: absolute; left: 19px; top: 0; width: 224px; height: 16px; border: 1px solid #aaa; border-radius: 2px; background: linear-gradient(#eee, #c8c8c8); }
.hthumb i { position: absolute; left: 106px; top: 4px; width: 7px; height: 6px; background: repeating-linear-gradient(90deg, #555 0 1px, transparent 1px 3px); }
.ptabs { height: 23px; flex: none; margin-top: 1px; display: flex; align-items: center; color: #8a8a8a; font-size: 13px; position: relative; }
.pt { display: flex; align-items: center; height: 22px; white-space: nowrap; }
.pt svg { width: 16px; height: 16px; flex: none; }
.t1 { margin-left: 7px; gap: 6px; width: 73px; border-right: 1px solid #999; height: 17px; }
.t2 { margin-left: 3px; gap: 5px; width: 48px; border-right: 1px solid #999; height: 17px; }
.t3 { margin-left: 4px; gap: 9px; width: 76px; }
.pt.act { margin-left: 3px; width: 85px; padding-left: 3px; gap: 6px; color: #222; background: #fafafa; border: 1px solid #888; border-top: 0; }

.doc { width: 1282px; flex: none; margin-left: 5px; display: flex; flex-direction: column; border: 1px solid #8a8a8a; border-bottom-color: #ddd; background: #f5f5f5; }
.tabs { height: 24px; flex: none; display: flex; align-items: center; padding-left: 2px; overflow: hidden; white-space: nowrap; color: #777; }
.tab { display: flex; align-items: center; height: 24px; flex: none; padding-left: 5px; position: relative; }
.tab::after { content: ""; position: absolute; right: 0; top: 4px; bottom: 5px; width: 1px; background: #444; }
.tab svg { width: 17px; height: 17px; flex: none; }
.tab em { margin-left: 6px; width: 107px; flex: none; }
.tab em.w-a { width: 25px; }
.tab em.w-s { width: 92px; }
.x { width: 12px; height: 12px; margin: 0 4px 0 10px; flex: none; background: #7d7d7d; position: relative; border-radius: 1px; }
.x::before, .x::after { content: ""; position: absolute; left: 1.500px; top: 5px; width: 9px; height: 2px; background: #fff; transform: rotate(45deg); }
.x::after { transform: rotate(-45deg); }
.tab.act { padding-left: 4px; background: #f0f3f7; font-weight: 700; color: #000; }
.tab.act em { font-weight: 700; width: 108px; margin-left: 6px; }
.tab.act .x { margin-left: 11px; }
.tab.last { width: 90px; overflow: hidden; }
.tab.last::after { display: none; }
.tab.last em { width: 64px; overflow: hidden; }
.tabnav { display: flex; gap: 7px; margin-left: 3px; align-items: center; }
.nl, .nr { width: 0; height: 0; border: 5px solid transparent; display: block; }
.nl { border-right-color: #aaa; border-left: 0; }
.nr { border-left-color: #000; border-right: 0; }
.canvas { flex: 1; position: relative; background: #a0a0a0; overflow: hidden; box-shadow: inset 0 -1px 0 #fff; }

/* free canvas of the screen editor */
.hnd { position: absolute; width: 13px; height: 5px; border: 1px solid #000; background: #fff; }
.h1 { left: 88px; top: 37px; }
.h2 { left: 653px; top: 37px; }
.h3 { left: 94px; top: 557px; }
.h4 { left: 654px; top: 557px; }
.screen { position: absolute; left: 60px; top: 59px; width: 643px; height: 482px; border: 1px solid #fff; background: #000 radial-gradient(circle at .5px .5px, #6b6b3c .6px, transparent .9px) 0 0 / 20px 20px; font-family: "Liberation Sans", "Noto Sans CJK KR", sans-serif; }
.winrect { position: absolute; left: 13px; top: 9px; width: 321px; height: 241px; }
.tag { position: absolute; height: 18px; padding: 0 7px 0 3px; background: rgba(255,255,255,.4); color: #7dff7d; font: 13.500px/18px "Liberation Serif", serif; white-space: nowrap; }
.tg1 { left: 13px; top: 9px; }
.tg2 { left: 355px; top: 9px; }
.tg3 { left: 13px; top: 262px; }
.tg4 { left: 107px; top: 262px; }
.orb { position: absolute; left: 335px; top: 10px; width: 17px; height: 17px; }
.dots { position: absolute; left: 353px; top: 7px; width: 22px; height: 22px; }
.hw { position: absolute; display: flex; align-items: center; justify-content: center; text-align: center; border: 3px solid; border-color: #9d9d9d #8a8a8a #6f6f6f #9a9a9a; background: #1d2a55; box-shadow: inset 0 0 0 2px #0f1733, inset 2px 2px 0 2px #3a4a80; color: #fff; font-size: 17px; line-height: 16px; }
.b1 { left: 13px; top: 262px; width: 77px; height: 66px; padding-top: 7px; }
.b2 { left: 107px; top: 262px; width: 77px; height: 66px; padding-top: 7px; }
.cap { position: absolute; top: 348px; color: #fff; font-size: 17px; line-height: 18px; white-space: nowrap; }
.cap s { display: inline-block; transform: scaleX(.72); transform-origin: 0 50%; margin-right: -18px; }
.c1 { left: 13px; }
.c2 { left: 147px; }
.c3 { left: 279px; }
.c4 { left: 416px; }
.disp { position: absolute; top: 372px; width: 120px; height: 48px; border: 1px solid #fff; background: #000050; }
.d1 { left: 13px; }
.d2 { left: 146px; }
.d3 { left: 279px; }
.d4 { left: 415px; }
.seg { position: absolute; left: 9px; top: 5px; width: 102px; height: 38px; background: #000; }
.seg u, .seg b { position: absolute; left: 2px; top: 0; font-family: Inter, "Liberation Mono", monospace; font-size: 44px; line-height: 38px; font-feature-settings: "tnum"; transform: scaleX(.72); transform-origin: 0 0; white-space: nowrap; }
.seg u { color: #444; font-weight: 500; }
.seg b { color: #ececec; font-weight: 200; }
.dtag { position: absolute; left: 0; top: 0; height: 18px; width: 105px; padding-left: 3px; background: rgba(255,255,255,.4); color: #7dff7d; font: 13.500px/18px "Liberation Serif", serif; white-space: nowrap; }
.dim { background: #101a36; border-color: #3b3b40; box-shadow: inset 0 0 0 1px #080d1f; color: #7c7c7c; top: 434px; height: 47px; line-height: 16px; font-size: 16px; white-space: nowrap; overflow: visible; }
.e1 { left: 0; width: 64px; }
.e2 { left: 65px; width: 62px; }
.e3 { left: 128px; width: 68px; }
.e4 { left: 197px; width: 62px; }
.tight { font-size: 12px; font-weight: 700; line-height: 13px; }

/* dialog */
.dialog { position: absolute; left: 611px; top: 67px; width: 604px; height: 451px; padding: 0 6px 6px; border: 1px solid #3a3a3a; border-radius: 6px; display: flex; flex-direction: column;
  background: linear-gradient(90deg, #34373b 0, #5f6670 40px, #8a94a0 82px, #7d8792 88px, #a4b8d0 97px, #b3c4d8 100%); box-shadow: 2px 3px 6px rgba(40,50,60,.55); color: #222; }
.dlg-title { height: 27px; flex: none; display: flex; align-items: center; gap: 4px; padding-left: 2px; position: relative; font-size: 13px; color: #111; }
.dlg-title svg { width: 16px; height: 16px; }
.dlg-x { position: absolute; right: 0; top: -1px; width: 46px; height: 20px; border: 1px solid #8c9db0; border-top: 0; border-radius: 0 0 3px 3px; background: linear-gradient(#c9d5e2, #aebfd2); display: flex; align-items: center; justify-content: center; font: 700 12px "Liberation Sans", sans-serif; color: #444; }
.dlg-body { flex: 1; border: 1px solid #444; background: #f0f0f0; display: flex; flex-direction: column; }
.dlg-main { height: 372px; flex: none; display: flex; padding-top: 4px; }
.dlg-left { width: 123px; flex: none; padding-left: 7px; }
.dlg-left label { display: block; height: 20px; padding: 3px 0 0 2px; line-height: 17px; }
.dlg-left .l2 { margin-top: 1px; height: 19px; padding-top: 1px; }
.field { width: 104px; height: 20px; background: #fff; border: 1px solid #bdc3cc; font-size: 12px; display: flex; align-items: center; padding-left: 1px; position: relative; }
.descf { border-color: #dfe3e8; }
.spin { position: absolute; right: 1px; top: 1px; width: 14px; height: 16px; display: flex; flex-direction: column; gap: 0; }
.spin i { flex: 1; border: 1px solid #c8c8c8; background: #f2f2f2; position: relative; }
.spin i::after { content: ""; position: absolute; left: 3px; top: 2px; border: 3px solid transparent; border-bottom-color: #3f5f9a; border-top: 0; }
.spin i:last-child::after { border-top: 3px solid #3f5f9a; border-bottom: 0; }
.dlg-tabs { width: 458px; flex: none; display: flex; flex-direction: column; }
.dtab { width: 47px; height: 20px; margin-bottom: -1px; border: 1px solid #888; border-bottom: 0; background: #fff; padding-left: 8px; position: relative; z-index: 1; line-height: 18px; }
.dpanel { height: 349px; flex: none; border: 1px solid #888; background: #fff; padding: 17px 0 0 21px; }
.r-top { display: flex; align-items: center; height: 21px; }
.r-top label { width: 119px; flex: none; }
.s-word { width: 125px; }
.s-mid { width: 96px; height: 21px; font-size: 12px; }
.hl { position: absolute; background: #ffff00; mix-blend-mode: multiply; border-radius: 2px; }
.hl1 { left: -5px; top: -1px; width: 127px; height: 21px; }
.hl2 { left: -1px; top: 1px; width: 106px; height: 20px; }
.hl3 { left: -4px; top: 7px; width: 88px; height: 16px; }
.dv { margin: 13px 9px 17px -6px; border: 0; border-top: 1px solid #a8a8a8; height: 0; }
.fgrid { display: grid; grid-template-columns: 129px 21px 170px; grid-template-rows: 36px 36px 32px 32px 32px 20px; align-items: start; }
.fgrid label { line-height: 20px; }
.xy { font-size: 12px; color: #444; line-height: 20px; margin-left: -1px; }
.ctl-row { display: flex; gap: 3px; width: 190px; }
.combo { width: 158px; height: 20px; flex: none; background: #fff; border: 1px solid #dde1e6; display: flex; align-items: center; padding-left: 3px; position: relative; font-size: 12px; white-space: nowrap; }
.calc { width: 19px; height: 20px; flex: none; border: 1px solid #777; border-radius: 3px; background: #eef3f8; display: flex; align-items: center; justify-content: center; }
.calc svg { width: 14px; height: 14px; }
.ro { width: 136px; height: 20px; background: #eeeeee; border: 1px solid #dadada; display: flex; align-items: center; padding-left: 2px; font-size: 12px; color: #333; }
.dlg-foot { display: flex; align-items: center; justify-content: space-between; padding: 14px 15px 0 20px; }
.foot-r { display: flex; gap: 9px; }
.btn { width: 82px; height: 18px; border: 1px solid #777; border-radius: 2px; background: linear-gradient(#f5f5f5, #dcdcdc); display: flex; align-items: center; justify-content: center; font-size: 13px; }
.btn.def { border: 2px solid #3f9ae0; }

/* bottom */
.errbar { height: 26px; flex: none; background: #f7f7f7; padding: 4px 0 0 2px; }
.errtab { display: inline-flex; align-items: center; gap: 4px; width: 83px; height: 22px; border: 1px solid #888; border-bottom: 0; padding-left: 3px; color: #555; font-size: 13px; background: #f5f5f5; }
.errtab svg { width: 17px; height: 17px; flex: none; }
.fkeys { height: 26px; flex: none; display: flex; align-items: center; padding-left: 5px; background: linear-gradient(#fbfbfb, #efefef); overflow: hidden; white-space: nowrap; border-bottom: 1px solid #8f8f8f; }
.fkeys .grip { margin-right: 4px; }
.fk { width: 157.100px; flex: none; display: flex; align-items: center; gap: 1px; color: #222; font-size: 13px; }
.fk kbd { width: 24px; height: 16px; flex: none; background: #d4e3f3; font: 12px/16px "Liberation Sans", sans-serif; padding-left: 3px; color: #222; }
.fk.off { color: #9a9a9a; }
.fk.off kbd { background: #dcdcdc; color: #a8a8a8; }
.status { flex: 1; display: flex; align-items: center; background: #f0edec; padding-left: 2px; position: relative; }
.st-ic { width: 16px; height: 16px; flex: none; }
.st-txt { margin-left: 4px; white-space: pre; font-size: 12.500px; }
.zoomctl { position: absolute; left: 1417px; top: 0; right: 0; bottom: 0; display: flex; align-items: center; gap: 0; }
.zb { width: 11px; height: 15px; border-radius: 2px; background: #444; color: #fff; font: 700 12px/14px "Liberation Sans", sans-serif; text-align: center; flex: none; }
.slider { width: 115px; height: 18px; position: relative; flex: none; }
.rail { position: absolute; left: 6px; right: 9px; top: 1px; height: 5px; background: #aaa; border: 1px solid #888; }
.ticks { position: absolute; left: 12px; right: 15px; top: 9px; height: 5px; background: repeating-linear-gradient(90deg, #444 0 2px, transparent 2px 7px); }
.knob { position: absolute; left: 53px; top: 2px; width: 5px; height: 16px; background: #ddd; border: 1px solid #555; border-radius: 1px; }
.zv { width: 36px; height: 18px; margin-left: 4px; background: #e4e4e4; border: 1px solid #ccc; flex: none; }
```
